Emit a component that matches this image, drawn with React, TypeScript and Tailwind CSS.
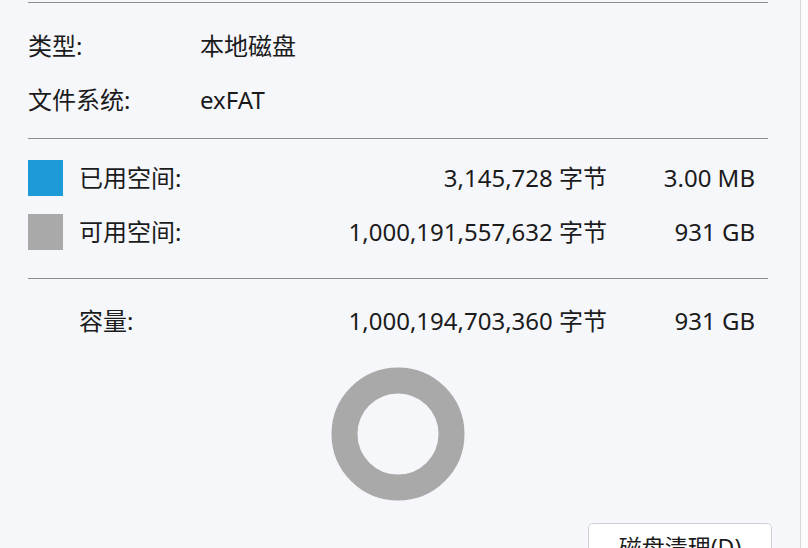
import React from "react";

const font = {
  fontFamily: '"Noto Sans", "Noto Sans CJK SC", sans-serif',
};

function Divider() {
  return <div className="h-px bg-[#8c8c8c]" />;
}

interface InfoRowProps {
  label: string;
  value: string;
}

function InfoRow({ label, value }: InfoRowProps) {
  return (
    <div className="flex h-[54px] items-center">
      <span className="w-[172px]">{label}</span>
      <span>{value}</span>
    </div>
  );
}

interface SpaceRowProps {
  swatch?: string;
  label: string;
  bytes: string;
  size: string;
}

function SpaceRow({ swatch, label, bytes, size }: SpaceRowProps) {
  return (
    <div className="mr-[13px] flex h-[54px] items-center">
      <div className="w-[51px] shrink-0">
        {swatch && <div className={`h-[36px] w-[35px] ${swatch}`} />}
      </div>
      <span className="flex-1">{label}</span>
      <span className="w-[300px] text-right">{bytes}</span>
      <span className="w-[148px] text-right">{size}</span>
    </div>
  );
}

export default function App() {
  return (
    <div
      className="flex h-[548px] w-[808px] overflow-hidden bg-[#fbfbfc] text-[24px] text-[#1b1b1b]"
      style={font}
    >
      <div className="w-[801px] shrink-0 border-r border-[#d6d6d8] bg-[#f6f7fb] pl-[28px] pr-[32px]">
        <div className="mt-[2px]">
          <Divider />
        </div>
        <div className="pb-[11px] pt-[16px]">
          <InfoRow label="类型:" value="本地磁盘" />
          <InfoRow label="文件系统:" value="exFAT" />
        </div>
        <Divider />
        <div className="pb-[19px] pt-[12px]">
          <SpaceRow
            swatch="bg-[#1e9ad9]"
            label="已用空间:"
            bytes="3,145,728 字节"
            size="3.00 MB"
          />
          <SpaceRow
            swatch="bg-[#a9a9aa]"
            label="可用空间:"
            bytes="1,000,191,557,632 字节"
            size="931 GB"
          />
        </div>
        <Divider />
        <div className="pt-[15px]">
          <SpaceRow
            label="容量:"
            bytes="1,000,194,703,360 字节"
            size="931 GB"
          />
        </div>
        <div className="mt-[19px] flex justify-center">
          <svg width="134" height="134" viewBox="0 0 134 134">
            <circle
              cx="67"
              cy="67"
              r="53.5"
              fill="none"
              stroke="#a9a9aa"
              strokeWidth="26"
            />
          </svg>
        </div>
        <div className="mr-[-4px] mt-[22px] grid grid-cols-[1fr_auto_1fr]">
          <div />
          <div className="pt-[18px] text-[22px]">驱动器 E:</div>
          <div className="flex justify-end">
            <button className="h-[40px] w-[184px] rounded-[5px] border border-[#d0d0d4] bg-white pt-[6px] text-[23px]">
              磁盘清理(D)
            </button>
          </div>
        </div>
      </div>
    </div>
  );
}
